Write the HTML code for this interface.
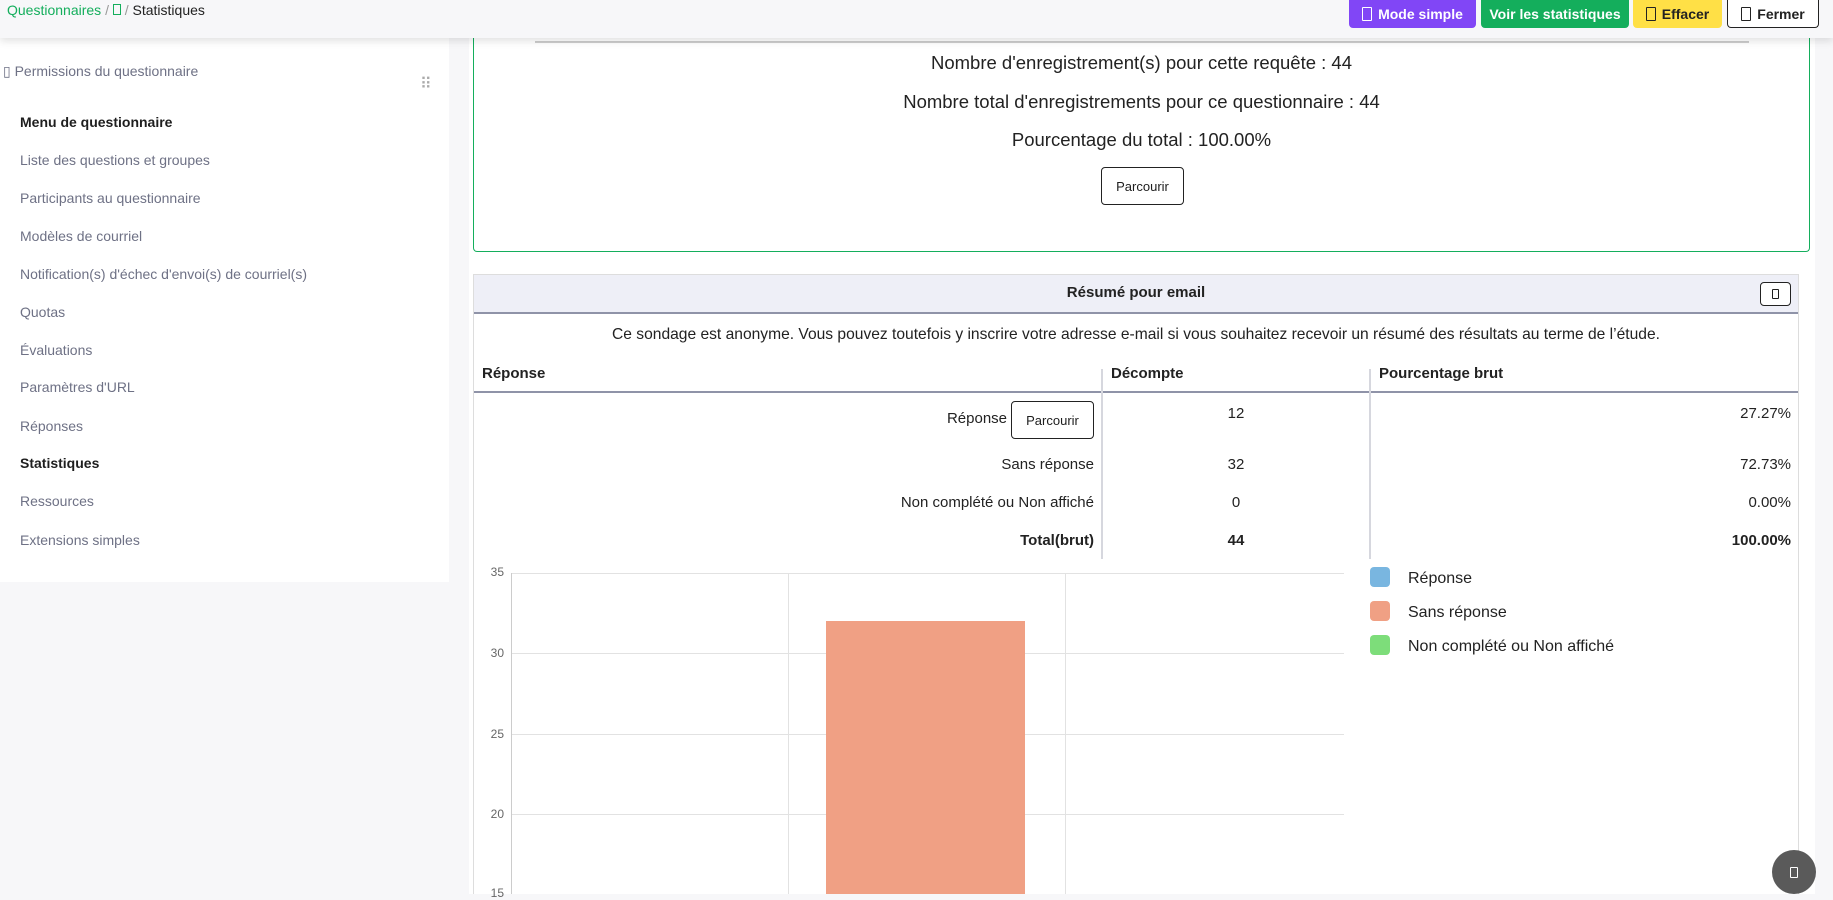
<!DOCTYPE html>
<html><head><meta charset="utf-8"><style>
*{box-sizing:border-box;margin:0;padding:0}
body{width:1833px;height:894px;overflow:hidden;background:#f7f7f9;font-family:"Liberation Sans",sans-serif;color:#1e1e1e;position:relative}
.abs{position:absolute}
.top{left:0;top:0;width:1833px;height:38px;background:#f7f7f9;box-shadow:0 3px 8px rgba(0,0,0,.12);z-index:5}
.bc{left:7px;top:2px;font-size:14px;color:#14ae5c}
.bc span{color:#999}
.btn{position:absolute;top:0;height:28px;border-radius:0 0 4px 4px;font-size:14px;font-weight:bold;display:flex;align-items:center;justify-content:center;gap:6px}
.ic{display:inline-block;width:10px;height:14px;border:1.2px solid currentColor;border-radius:1px}
.side{left:0;top:38px;width:449px;height:544px;background:#fff}
.side div{position:absolute;left:20px;font-size:14px;color:#6e7185}
.main{left:469px;top:38px;width:1346px;height:856px;background:#fff}
.c{position:absolute;left:473px;width:1337px;text-align:center;font-size:18.5px;color:#222}
.pb{position:absolute;border:1px solid #222;border-radius:4px;background:#fff;font-size:13px;display:flex;align-items:center;justify-content:center}
.t{position:absolute;font-size:15px;color:#222}
.b{font-weight:bold}
.yl{position:absolute;left:484px;font-size:12px;color:#666;width:20px;text-align:right}
.hl{position:absolute;left:511px;width:833px;height:1px;background:#e2e2e2}
</style></head><body>
<div class="abs top"></div>
<div class="abs bc" style="z-index:6">Questionnaires <span>/</span> <span style="color:#14ae5c;display:inline-block;width:8px;height:11px;border:1px solid #14ae5c"></span> <span>/</span> <b style="font-weight:normal;color:#222">Statistiques</b></div>
<div class="btn" style="left:1349px;width:127px;background:#8146f6;color:#fff;z-index:6"><i class="ic"></i>Mode simple</div>
<div class="btn" style="left:1481px;width:148px;background:#14ae5c;color:#fff;z-index:6">Voir les statistiques</div>
<div class="btn" style="left:1633px;width:89px;background:#ffe046;color:#222;z-index:6"><i class="ic"></i>Effacer</div>
<div class="btn" style="left:1727px;width:92px;background:#fff;color:#222;border:1px solid #222;border-top:none;z-index:6"><i class="ic"></i>Fermer</div>

<div class="abs side">
<div style="left:3px;top:25px">▯ Permissions du questionnaire</div>
<div style="left:420px;top:43px;color:#aaa;font-size:16px;letter-spacing:1px;line-height:8px">⠿</div>
<div style="top:76px;color:#1e1e1e;font-weight:bold;font-size:14px">Menu de questionnaire</div>
<div style="top:114px">Liste des questions et groupes</div>
<div style="top:152px">Participants au questionnaire</div>
<div style="top:190px">Modèles de courriel</div>
<div style="top:228px">Notification(s) d'échec d'envoi(s) de courriel(s)</div>
<div style="top:266px">Quotas</div>
<div style="top:304px">Évaluations</div>
<div style="top:341px">Paramètres d'URL</div>
<div style="top:380px">Réponses</div>
<div style="top:417px;color:#1e1e1e;font-weight:bold">Statistiques</div>
<div style="top:455px">Ressources</div>
<div style="top:494px">Extensions simples</div>
</div>

<div class="abs main"></div>
<div class="abs" style="left:473px;top:30px;width:1337px;height:222px;border:1px solid #14ae5c;border-top:none;border-radius:0 0 4px 4px"></div>
<div class="abs" style="left:535px;top:41px;width:1214px;height:2px;background:#ccc"></div>
<div class="c" style="top:52px">Nombre d'enregistrement(s) pour cette requête : 44</div>
<div class="c" style="top:91px">Nombre total d'enregistrements pour ce questionnaire : 44</div>
<div class="c" style="top:129px">Pourcentage du total : 100.00%</div>
<div class="pb" style="left:1101px;top:167px;width:83px;height:38px">Parcourir</div>

<div class="abs" style="left:473px;top:274px;width:1326px;height:620px;border:1px solid #ddd;border-bottom:none"></div>
<div class="abs" style="left:474px;top:275px;width:1324px;height:39px;background:#eeeff7;border-bottom:2px solid #8f93a8"></div>
<div class="t b" style="left:473px;width:1326px;text-align:center;top:284px">Résumé pour email</div>
<div class="pb" style="left:1760px;top:282px;width:31px;height:24px"><i class="ic" style="width:7px;height:10px"></i></div>
<div class="t" style="left:473px;width:1326px;text-align:center;top:326px;font-size:15.6px">Ce sondage est anonyme. Vous pouvez toutefois y inscrire votre adresse e-mail si vous souhaitez recevoir un résumé des résultats au terme de l’étude.</div>
<div class="t b" style="left:482px;top:365px">Réponse</div>
<div class="t b" style="left:1111px;top:365px">Décompte</div>
<div class="t b" style="left:1379px;top:365px">Pourcentage brut</div>
<div class="abs" style="left:474px;top:391px;width:1324px;height:2px;background:#8f93a8"></div>
<div class="abs" style="left:1101px;top:369px;width:2px;height:190px;background:#d6d7de"></div>
<div class="abs" style="left:1369px;top:369px;width:2px;height:190px;background:#d6d7de"></div>
<div class="t" style="right:826px;top:410px">Réponse</div>
<div class="pb" style="left:1011px;top:401px;width:83px;height:38px">Parcourir</div>
<div class="t" style="right:739px;top:456px">Sans réponse</div>
<div class="t" style="right:739px;top:494px">Non complété ou Non affiché</div>
<div class="t b" style="right:739px;top:532px">Total(brut)</div>
<div class="t" style="left:1216px;width:40px;text-align:center;top:405px">12</div>
<div class="t" style="left:1216px;width:40px;text-align:center;top:456px">32</div>
<div class="t" style="left:1216px;width:40px;text-align:center;top:494px">0</div>
<div class="t b" style="left:1216px;width:40px;text-align:center;top:532px">44</div>
<div class="t" style="right:42px;top:405px">27.27%</div>
<div class="t" style="right:42px;top:456px">72.73%</div>
<div class="t" style="right:42px;top:494px">0.00%</div>
<div class="t b" style="right:42px;top:532px">100.00%</div>

<div class="hl" style="top:573px"></div><div class="hl" style="top:653px"></div><div class="hl" style="top:734px"></div><div class="hl" style="top:814px"></div>
<div class="abs" style="left:511px;top:573px;width:1px;height:321px;background:#ccc"></div>
<div class="abs" style="left:788px;top:573px;width:1px;height:321px;background:#e2e2e2"></div>
<div class="abs" style="left:1065px;top:573px;width:1px;height:321px;background:#e2e2e2"></div>
<div class="abs" style="left:826px;top:621px;width:199px;height:273px;background:#f0a084"></div>
<div class="yl" style="top:565px">35</div><div class="yl" style="top:646px">30</div><div class="yl" style="top:727px">25</div><div class="yl" style="top:807px">20</div><div class="yl" style="top:886px">15</div>

<div class="abs" style="left:1370px;top:567px;width:20px;height:20px;border-radius:4px;background:#79b6e0"></div>
<div class="abs" style="left:1370px;top:601px;width:20px;height:20px;border-radius:4px;background:#f0a084"></div>
<div class="abs" style="left:1370px;top:635px;width:20px;height:20px;border-radius:4px;background:#7ddd7a"></div>
<div class="t" style="left:1408px;top:570px;font-size:16px">Réponse</div>
<div class="t" style="left:1408px;top:604px;font-size:16px">Sans réponse</div>
<div class="t" style="left:1408px;top:638px;font-size:16px">Non complété ou Non affiché</div>

<div class="abs" style="left:1772px;top:850px;width:44px;height:44px;border-radius:50%;background:#5a5a5a;display:flex;align-items:center;justify-content:center"><i class="ic" style="color:#fff;width:8px;height:11px"></i></div>
</body></html>
